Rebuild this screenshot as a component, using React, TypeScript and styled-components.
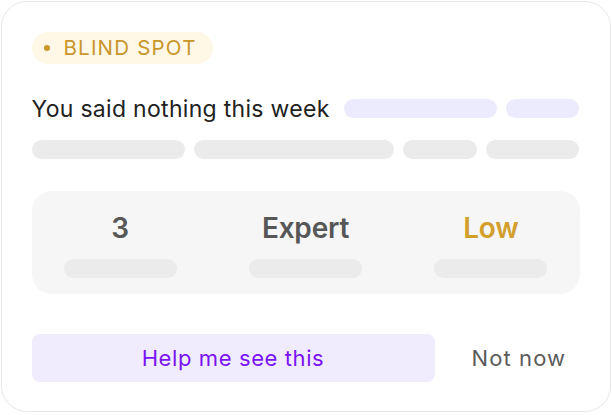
import React from "react";
import styled, { createGlobalStyle } from "styled-components";

const GlobalStyle = createGlobalStyle`
  html, body {
    margin: 0;
    padding: 0;
    background: #ffffff;
  }
  body {
    font-family: Inter, "Liberation Sans", sans-serif;
  }
  * {
    box-sizing: border-box;
  }
`;

const topPills = [153, 73];
const metaPills = [153, 200, 74, 93];

const stats = [
  { value: "3", tone: "neutral" },
  { value: "Expert", tone: "neutral" },
  { value: "Low", tone: "warn" },
] as const;

export default function App() {
  return (
    <>
      <GlobalStyle />
      <Card>
        <Badge>
          <Dot />
          BLIND SPOT
        </Badge>

        <HeadlineRow>
          <Headline>You said nothing this week</Headline>
          {topPills.map((w, i) => (
            <Pill key={i} $tone="accent" style={{ width: w }} />
          ))}
        </HeadlineRow>

        <PillRow>
          {metaPills.map((w, i) => (
            <Pill key={i} $tone="muted" style={{ width: w }} />
          ))}
        </PillRow>

        <StatsBox>
          {stats.map((s) => (
            <StatCol key={s.value}>
              <StatValue $tone={s.tone}>{s.value}</StatValue>
              <Pill $tone="muted" style={{ width: 113 }} />
            </StatCol>
          ))}
        </StatsBox>

        <Actions>
          <PrimaryButton>Help me see this</PrimaryButton>
          <GhostButton>Not now</GhostButton>
        </Actions>
      </Card>
    </>
  );
}

const Card = styled.div`
  margin: 1px;
  width: 610px;
  height: 411px;
  border: 1.5px solid #e7e7e7;
  border-radius: 26px;
  background: #ffffff;
  padding: 29.5px 29.5px 0;
  display: flex;
  flex-direction: column;
`;

const Badge = styled.div`
  align-self: flex-start;
  height: 32px;
  padding: 0 16px 0 12px;
  border-radius: 999px;
  background: #fff8e7;
  color: #c8962b;
  font-size: 20.5px;
  letter-spacing: 1.2px;
  display: flex;
  align-items: center;
  gap: 14px;
`;

const Dot = styled.span`
  width: 6px;
  height: 6px;
  border-radius: 50%;
  background: #c8962b;
`;

const HeadlineRow = styled.div`
  margin-top: 31px;
  height: 28px;
  display: flex;
  align-items: center;
  gap: 9px;
`;

const Headline = styled.h1`
  margin: 0 5px 0 0;
  font-size: 23px;
  font-weight: 400;
  line-height: 28px;
  color: #222222;
  letter-spacing: 0.3px;
  white-space: nowrap;
`;

const Pill = styled.span<{ $tone: "accent" | "muted" }>`
  display: block;
  height: 19px;
  flex-shrink: 0;
  border-radius: 10px;
  background: ${(p) => (p.$tone === "accent" ? "#eceafd" : "#ebebeb")};
`;

const PillRow = styled.div`
  margin-top: 17px;
  display: flex;
  gap: 9px;
`;

const StatsBox = styled.div`
  margin-top: 32px;
  width: 548px;
  height: 103px;
  border-radius: 20px;
  background: #f6f6f6;
  padding: 22px 0 0;
  display: grid;
  grid-template-columns: repeat(3, 1fr);
  gap: 8px;
`;

const StatCol = styled.div`
  display: flex;
  flex-direction: column;
  align-items: center;
  gap: 15px;
`;

const StatValue = styled.div<{ $tone: "neutral" | "warn" }>`
  font-size: 28px;
  font-weight: 600;
  line-height: 31px;
  letter-spacing: -0.2px;
  color: ${(p) => (p.$tone === "warn" ? "#d29f2d" : "#575757")};
`;

const Actions = styled.div`
  margin-top: 40px;
  display: flex;
  align-items: center;
  gap: 24px;
`;

const PrimaryButton = styled.button`
  width: 403px;
  height: 48px;
  border: none;
  border-radius: 8px;
  background: #f0ecfd;
  color: #7a14f5;
  font-family: inherit;
  font-size: 22px;
  font-weight: 400;
  letter-spacing: 0.6px;
  cursor: pointer;
`;

const GhostButton = styled.button`
  height: 48px;
  padding: 0 13px;
  border: none;
  background: transparent;
  color: #5b5b5b;
  font-family: inherit;
  font-size: 22px;
  letter-spacing: 1.1px;
  cursor: pointer;
`;
